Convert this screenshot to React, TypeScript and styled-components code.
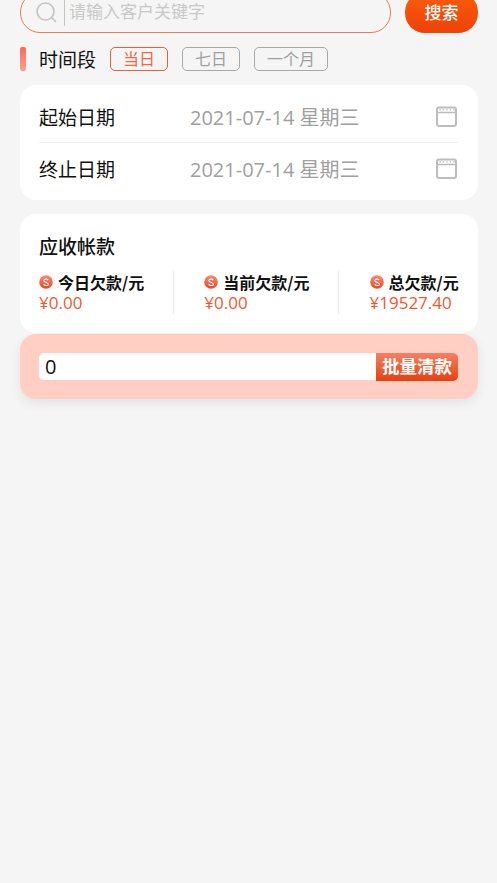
import React from "react";
import styled, { createGlobalStyle } from "styled-components";

const Global = createGlobalStyle`
  html, body { margin: 0; padding: 0; background: #f5f5f5; }
  body { font-family: "Open Sans", "Noto Sans CJK SC", sans-serif; }
  * { box-sizing: border-box; }
`;

const Page = styled.div`
  height: 883px;
  overflow: hidden;
  padding: 0 19px 0 20px;
  background: #f5f5f5;
  display: flex;
  flex-direction: column;
`;

const SearchRow = styled.div`
  margin-top: -8px;
  display: flex;
  justify-content: space-between;
`;

const SearchBox = styled.div`
  width: 371px;
  height: 41px;
  border: 1.5px solid #ee7a58;
  border-radius: 20px;
  display: flex;
  align-items: center;
  padding-left: 14px;
`;

const SearchDivider = styled.span`
  width: 1px;
  height: 26px;
  margin: 0 4px 0 6px;
  background: #c4c4c4;
`;

const SearchInput = styled.input`
  flex: 1;
  min-width: 0;
  height: 24px;
  margin-top: -3px;
  border: 0;
  outline: 0;
  padding: 0;
  background: transparent;
  font: 17px/24px "Noto Sans CJK SC", sans-serif;
  &::placeholder { color: #c8c8c8; opacity: 1; }
`;

const SearchButton = styled.button`
  width: 73px;
  height: 41px;
  border: 0;
  padding: 0 0 3px;
  border-radius: 20px;
  background: linear-gradient(180deg, #fb5c0c 0%, #ee4206 100%);
  color: #fff;
  font: 500 17px "Noto Sans CJK SC", sans-serif;
`;

const PeriodRow = styled.div`
  margin-top: 14px;
  height: 24px;
  display: flex;
  align-items: center;
`;

const Accent = styled.span`
  width: 6px;
  height: 24px;
  border-radius: 2px;
  background: linear-gradient(180deg, #fb6a58 0%, #fda292 100%);
`;

const PeriodLabel = styled.span`
  margin: 0 14px 0 13px;
  font: 19px/24px "Noto Sans CJK SC", sans-serif;
  color: #111;
`;

const Tag = styled.span<{ $active?: boolean; $wide?: boolean }>`
  width: ${(p) => (p.$wide ? 74 : 58)}px;
  height: 24px;
  margin-right: 14px;
  border: 1.5px solid ${(p) => (p.$active ? "#ee5f37" : "#a8a8a8")};
  border-radius: 5px;
  color: ${(p) => (p.$active ? "#f2693f" : "#a0a0a0")};
  font: 16px/20px "Noto Sans CJK SC", sans-serif;
  text-align: center;
`;

const Card = styled.section`
  background: #fff;
  border-radius: 16px;
`;

const DateCard = styled(Card)`
  margin-top: 14px;
  height: 115px;
  padding: 7px 20px 0 19px;
`;

const DateRow = styled.div<{ $line?: boolean }>`
  height: ${(p) => (p.$line ? 51 : 52)}px;
  padding-bottom: 2px;
  display: flex;
  align-items: center;
  border-bottom: ${(p) => (p.$line ? "1px solid #f0f0f0" : "0")};
`;

const DateLabel = styled.span`
  width: 151px;
  font: 19px "Noto Sans CJK SC", sans-serif;
  color: #111;
`;

const DateValue = styled.span`
  flex: 1;
  font-size: 20px;
  color: #a0a0a0;
`;

const CalendarGlyph = styled.svg`
  width: 23px;
  height: 22px;
  color: #bdbdbd;
`;

const Calendar = () => (
  <CalendarGlyph viewBox="0 0 23 22" fill="none" stroke="currentColor">
    <rect x="2" y="2.5" width="19" height="18.5" rx="2" strokeWidth="2" />
    <path d="M2 7.5h19" strokeWidth="1.6" />
    <path d="M5 4v1.5M8.5 4v1.5M12 4v1.5M15.5 4v1.5M19 4v1.5" strokeWidth="1.2" />
  </CalendarGlyph>
);

const ReceivableCard = styled(Card)`
  margin-top: 14px;
  height: 119px;
  padding: 19px 0 0 19px;
`;

const Title = styled.h2`
  margin: 0;
  font: 500 19px/26px "Noto Sans CJK SC", sans-serif;
  color: #111;
`;

const Stats = styled.div`
  margin-top: 12px;
  display: flex;
`;

const Stat = styled.div<{ $last?: boolean }>`
  flex: none;
  width: ${(p) => (p.$last ? "auto" : "135px")};
  height: 43px;
  margin-right: 30.25px;
  border-right: ${(p) => (p.$last ? "0" : "1.5px solid #e8e8e8")};
`;

const StatHead = styled.div`
  display: flex;
  align-items: center;
  height: 22px;
  font: 700 16px/22px "Noto Sans CJK SC", sans-serif;
  color: #111;
  white-space: nowrap;
`;

const CoinGlyph = styled.svg`
  width: 14px;
  height: 14px;
  margin-right: 5px;
  flex: none;
`;

const Coin = ({ id }: { id: string }) => (
  <CoinGlyph viewBox="0 0 14 14">
    <defs>
      <linearGradient id={id} x1="0" y1="0" x2="0" y2="1">
        <stop offset="0" stopColor="#fb8a70" />
        <stop offset="1" stopColor="#ea4a24" />
      </linearGradient>
    </defs>
    <circle cx="7" cy="7" r="6.8" fill={`url(#${id})`} />
    <path d="M9.2 5C8.2 3.8 4.8 3.8 4.8 5.7S9.4 7.4 9.4 9.2 5.8 10.8 4.6 9.3" fill="none" stroke="#fff" strokeWidth="1.2" />
  </CoinGlyph>
);

const StatValue = styled.div`
  font-size: 17px;
  line-height: 20px;
  color: #f4572c;
  white-space: nowrap;
`;

const ClearPanel = styled.section`
  margin-top: 1px;
  height: 65px;
  padding: 19px 20px 0 19px;
  background: #ffcfc4;
  border-radius: 16px;
  box-shadow: 0 4px 12px rgba(0, 0, 0, 0.08);
  display: flex;
  align-items: flex-start;
`;

const AmountInput = styled.input`
  width: 337px;
  height: 27px;
  border: 0;
  outline: 0;
  padding: 0 6px;
  background: #fff;
  border-radius: 5px 0 0 5px;
  font: 20px "Open Sans", sans-serif;
  color: #111;
`;

const ClearButton = styled.button`
  width: 82px;
  height: 28px;
  border: 0;
  padding: 0 0 2px;
  border-radius: 0 5px 5px 0;
  background: linear-gradient(180deg, #f58062 0%, #e83f10 100%);
  color: #fff;
  font: 700 17.5px/26px "Noto Sans CJK SC", sans-serif;
  white-space: nowrap;
`;

export default function App() {
  return (
    <Page>
      <Global />
      <SearchRow>
        <SearchBox>
          <svg width="23" height="23" viewBox="0 0 23 23" fill="none" stroke="#c4c4c4" strokeWidth="1.7">
            <circle cx="10.5" cy="10.5" r="8.5" />
            <path d="M17 17l3.5 3.5" strokeLinecap="round" />
          </svg>
          <SearchDivider />
          <SearchInput placeholder="请输入客户关键字" />
        </SearchBox>
        <SearchButton>搜索</SearchButton>
      </SearchRow>

      <PeriodRow>
        <Accent />
        <PeriodLabel>时间段</PeriodLabel>
        <Tag $active>当日</Tag>
        <Tag>七日</Tag>
        <Tag $wide>一个月</Tag>
      </PeriodRow>

      <DateCard>
        <DateRow $line>
          <DateLabel>起始日期</DateLabel>
          <DateValue>2021-07-14 星期三</DateValue>
          <Calendar />
        </DateRow>
        <DateRow>
          <DateLabel>终止日期</DateLabel>
          <DateValue>2021-07-14 星期三</DateValue>
          <Calendar />
        </DateRow>
      </DateCard>

      <ReceivableCard>
        <Title>应收帐款</Title>
        <Stats>
          <Stat>
            <StatHead><Coin id="c1" />今日欠款/元</StatHead>
            <StatValue>¥0.00</StatValue>
          </Stat>
          <Stat>
            <StatHead><Coin id="c2" />当前欠款/元</StatHead>
            <StatValue>¥0.00</StatValue>
          </Stat>
          <Stat $last>
            <StatHead><Coin id="c3" />总欠款/元</StatHead>
            <StatValue>¥19527.40</StatValue>
          </Stat>
        </Stats>
      </ReceivableCard>

      <ClearPanel>
        <AmountInput defaultValue="0" />
        <ClearButton>批量清款</ClearButton>
      </ClearPanel>
    </Page>
  );
}
